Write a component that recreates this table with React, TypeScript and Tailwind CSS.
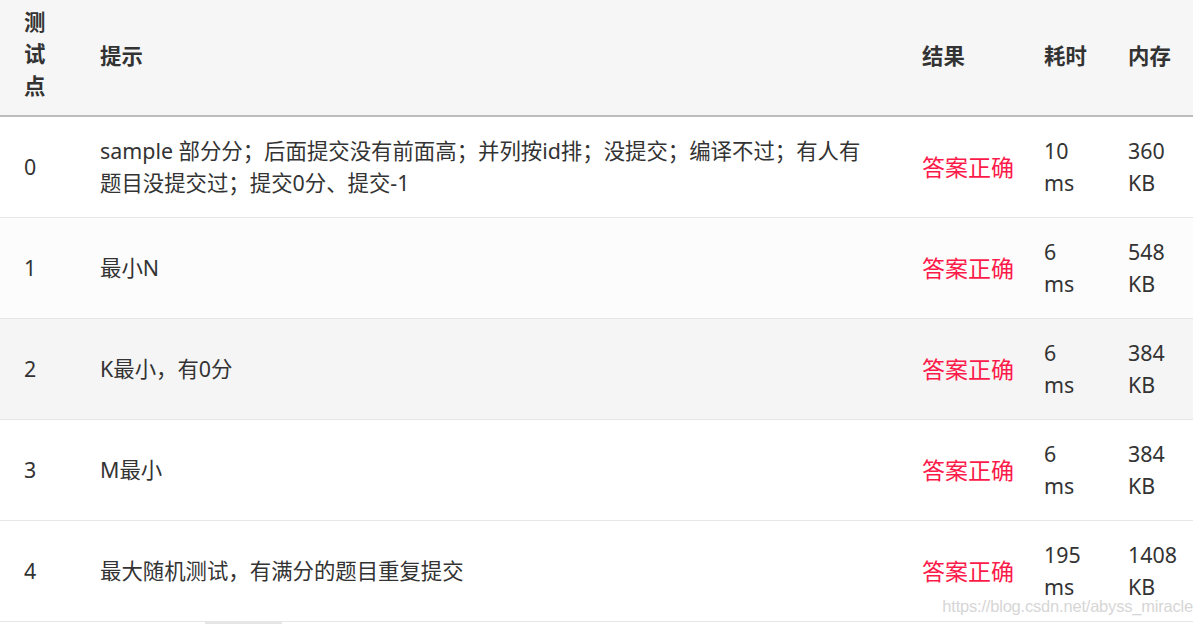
import React from "react";

type Row = {
  id: string;
  hint: React.ReactNode;
  time: string;
  mem: string;
  bg: string;
};

const rows: Row[] = [
  {
    id: "0",
    hint: (
      <>
        sample 部分分；后面提交没有前面高；并列按id排；没提交；编译不过；有人有
        <br />
        题目没提交过；提交0分、提交-1
      </>
    ),
    time: "10",
    mem: "360",
    bg: "bg-white",
  },
  { id: "1", hint: "最小N", time: "6", mem: "548", bg: "bg-[#fcfcfc]" },
  { id: "2", hint: "K最小，有0分", time: "6", mem: "384", bg: "bg-[#f5f5f5]" },
  { id: "3", hint: "M最小", time: "6", mem: "384", bg: "bg-white" },
  { id: "4", hint: "最大随机测试，有满分的题目重复提交", time: "195", mem: "1408", bg: "bg-white" },
];

const font = { fontFamily: '"Noto Sans", "Noto Sans CJK SC", sans-serif' };

export default function App() {
  return (
    <div className="relative w-[1201px] h-[624px] overflow-hidden bg-white text-[#333]" style={font}>
      <table className="table-fixed w-[1193px] border-collapse text-[21.4px] leading-[32px]">
        <colgroup>
          <col className="w-[76px]" />
          <col className="w-[822px]" />
          <col className="w-[122px]" />
          <col className="w-[84px]" />
          <col className="w-[89px]" />
        </colgroup>
        <thead>
          <tr className="bg-[#f6f6f6] border-b-2 border-[#bdbdbd] font-bold text-left">
            <th className="pl-6 pt-[6px] pb-[13px] align-middle font-bold">
              测<br />试<br />点
            </th>
            <th className="pl-6 pb-[4px] align-middle font-bold">提示</th>
            <th className="pl-6 pb-[4px] align-middle font-bold">结果</th>
            <th className="pl-6 pb-[4px] align-middle font-bold">耗时</th>
            <th className="pl-6 pb-[4px] align-middle font-bold">内存</th>
          </tr>
        </thead>
        <tbody>
          {rows.map(r => (
            <tr key={r.id} className={`${r.bg} border-b border-[#e6e6e6]`}>
              <td className="pl-6 align-middle h-[101px]">{r.id}</td>
              <td className="pl-6 align-middle whitespace-nowrap">{r.hint}</td>
              <td className="pl-6 align-middle whitespace-nowrap text-[23px] text-[#fc1a4a]">答案正确</td>
              <td className="pl-6 align-middle">
                {r.time}
                <br />
                ms
              </td>
              <td className="pl-6 align-middle">
                {r.mem}
                <br />
                KB
              </td>
            </tr>
          ))}
        </tbody>
      </table>

      {/* csdn watermark */}
      <div
        className="absolute right-[8px] top-[595px] text-[16.5px] leading-[22px] text-[#d6d6d6] tracking-[-0.2px]"
        style={{ fontFamily: '"Liberation Sans", Arial, sans-serif' }}
      >
        https://blog.csdn.net/abyss_miracle
      </div>

      {/* horizontal scrollbar thumb */}
      <div className="absolute left-[205px] top-[622px] w-[77px] h-[2px] bg-[#e6e6e6]" />
    </div>
  );
}
